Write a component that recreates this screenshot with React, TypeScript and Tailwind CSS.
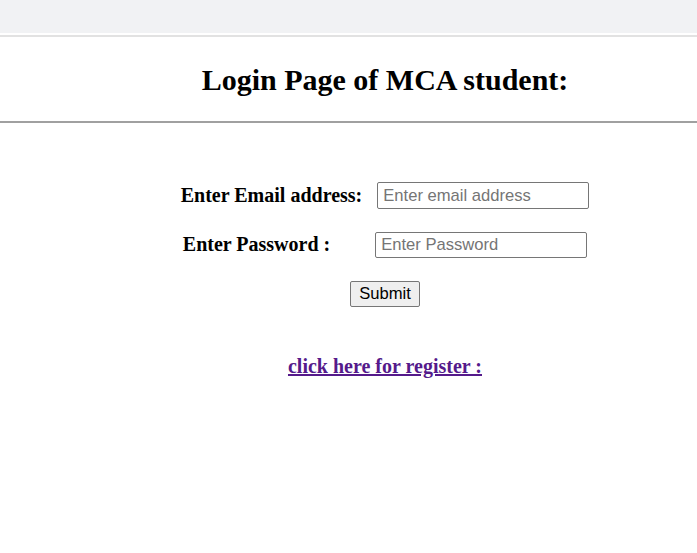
import React from 'react';

const App = () => {
  return (
    <div className="min-h-[553px] bg-white text-black" style={{ fontFamily: '"Liberation Serif", "Times New Roman", serif' }}>
      <div className="h-[33px] bg-[#f1f2f4]" />
      <div className="mt-[2px] h-[2px] bg-[#e2e2e2]" />

      <div className="pl-[73px]">
        <h1 className="text-center text-[30px] font-bold leading-none pt-[28px] pb-[26px]">
          Login Page of MCA student:
        </h1>
      </div>
      <div className="h-[2px] bg-[#a0a0a0]" />

      <form className="pl-[73px] pt-[59px]">
        <div className="flex items-center justify-center gap-[15px]">
          <label className="text-[20px] font-bold leading-[27px]">Enter Email address:</label>
          <input
            type="email"
            placeholder="Enter email address"
            className="h-[27px] w-[212px] rounded-[2px] border border-[#767676] px-[5px] text-[16.6px] placeholder:text-[#757575]"
            style={{ fontFamily: '"Liberation Sans", Arial, sans-serif' }}
          />
        </div>
        <div className="mt-[22px] flex items-center justify-center gap-[45px]">
          <label className="text-[20px] font-bold leading-[27px]">Enter Password :</label>
          <input
            type="password"
            placeholder="Enter Password"
            className="h-[26px] w-[212px] rounded-[2px] border border-[#767676] px-[5px] text-[16.6px] placeholder:text-[#757575]"
            style={{ fontFamily: '"Liberation Sans", Arial, sans-serif' }}
          />
        </div>
        <div className="mt-[23px] flex justify-center">
          <button
            type="button"
            className="h-[26px] w-[70px] rounded-[2px] border border-[#767676] bg-[#efefef] text-[16.6px]"
            style={{ fontFamily: '"Liberation Sans", Arial, sans-serif' }}
          >
            Submit
          </button>
        </div>
        <div className="mt-[48px] text-center leading-[23px]">
          <a href="#" className="text-[20px] font-bold text-[#551a8b] underline">
            click here for register :
          </a>
        </div>
      </form>
    </div>
  );
};

export default App;
